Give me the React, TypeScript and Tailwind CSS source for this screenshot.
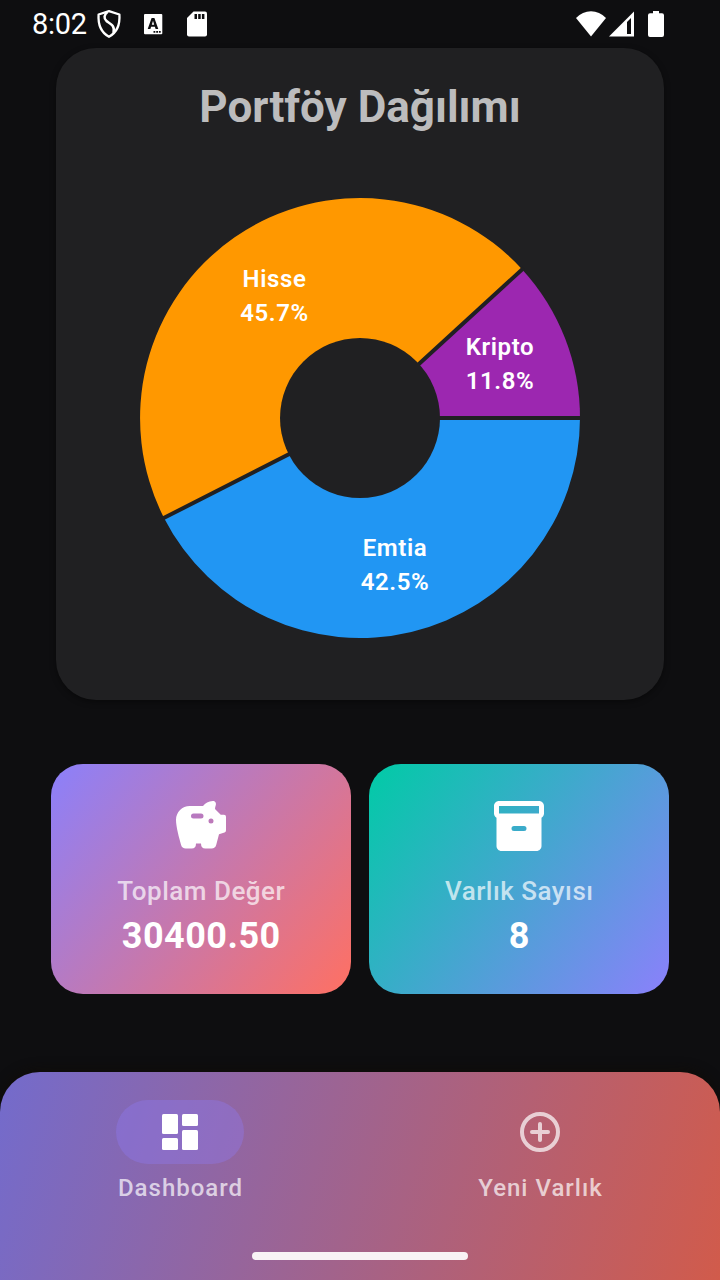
import type { ReactNode } from "react";

function StatusBar() {
  return (
    <header className="flex h-12 shrink-0 items-center justify-between pl-8 pr-14 text-white">
      <div className="flex h-full items-center">
        <span className="w-[64px] text-[29px] leading-[48px] tracking-[-0.3px]">8:02</span>
        <svg className="h-12 w-[26px]" viewBox="96 0 26 48" fill="none" stroke="#fff">
          <path d="M109 11.2L98.6 14.5C98 23 99.500 31.500 109 36.800C118.500 31.500 120 23 119.400 14.500Z" strokeWidth="2.300" strokeLinejoin="round" />
          <path d="M107.500 12C104 14.500 103.500 18.500 106.500 21C109.500 23.500 115.500 25 113.500 33" strokeWidth="2.500" />
        </svg>
        <svg className="ml-[22px] h-12 w-[19px]" viewBox="144 0 19 48">
          <rect x="144" y="14" width="18.300" height="20.300" rx="1" fill="#fff" />
          <path fillRule="evenodd" d="M151.600 18H154.400L158.300 29H155.600L154.900 26.800H151.100L150.400 29H147.700ZM153 20.800L151.800 24.700H154.200Z" fill="#0e0e10" />
          <path d="M153.500 31h1.800v1.700h-1.800zm2.700 0h1.800v1.700h-1.800zm2.700 0h1.800v1.700h-1.800z" fill="#0e0e10" />
        </svg>
        <svg className="ml-6 h-12 w-5" viewBox="187 0 20 48">
          <path d="M193.500 11.500H205Q207 11.500 207 13.500V34.500Q207 36.500 205 36.500H189Q187 36.500 187 34.500V18Z" fill="#fff" />
          <path d="M194.500 14h2.500v5h-2.500zm3.700 0h2.500v5h-2.500zm3.700 0h2.500v5h-2.500z" fill="#0e0e10" />
        </svg>
      </div>
      <svg className="h-12 w-[88px]" viewBox="576 0 88 48" fill="#fff">
        <path d="M576 18Q582.500 11.200 591 11.200T606 18L591 36.500Z" />
        <path d="M609 36.500L634 11.500V36.500Z" />
        <path d="M627 22L631 18V34H627Z" fill="#0e0e10" />
        <path d="M653 11h6v2.300h3q2 0 2 2V35q0 2-2 2h-12q-2 0-2-2V15.300q0-2 2-2h3z" />
      </svg>
    </header>
  );
}

function SliceLabel({ name, share, place }: { name: string; share: string; place: string }) {
  return (
    <div className={`absolute w-24 text-center text-[24px] leading-[34px] font-semibold tracking-[0.6px] text-white ${place}`}>
      <div>{name}</div>
      <div>{share}</div>
    </div>
  );
}

function Donut() {
  return (
    <div className="relative mx-auto mt-[65px] h-[440px] w-[440px]">
      <svg viewBox="-220 -220 440 440" className="h-full w-full">
        <path d="M0 0H220A220 220 0 0 1 -196 99.900Z" fill="#2196f3" />
        <path d="M0 0L-196 99.900A220 220 0 0 1 162.200 -148.600Z" fill="#ff9800" />
        <path d="M0 0L162.200 -148.600A220 220 0 0 1 220 0Z" fill="#9c27b0" />
        <path d="M0 0H222M0 0L-197.800 100.800M0 0L163.700 -150" stroke="#202022" strokeWidth="4" />
        <circle r="80" fill="#202022" />
      </svg>
      <SliceLabel name="Hisse" share="45.7%" place="left-[86.5px] top-[64px]" />
      <SliceLabel name="Kripto" share="11.8%" place="left-[312px] top-[132px]" />
      <SliceLabel name="Emtia" share="42.5%" place="left-[207px] top-[333px]" />
    </div>
  );
}

function StatCard({ icon, label, value, tone }: { icon: ReactNode; label: string; value: string; tone: string }) {
  return (
    <section className={`flex h-[230px] flex-1 flex-col items-center rounded-[32px] pt-8 ${tone}`}>
      {icon}
      <div className="mt-[17px] pl-[0.5px] text-[26px] leading-9 font-medium tracking-[0.5px] text-white/70">{label}</div>
      <div className="mt-[3px] pl-[0.5px] text-[36px] leading-[48px] font-bold tracking-[0.5px] text-white">{value}</div>
    </section>
  );
}

function PiggyIcon() {
  return (
    <svg viewBox="0 0 24 24" className="h-[60px] w-[60px]" fill="#fff">
      <path fillRule="evenodd" d="M7.5 4H12.800C13.700 2.900 15 2 16.700 2C17.700 2 18.200 2.800 17.900 3.700C17.700 4.300 17.600 4.800 17.600 5.200L19.900 7.500H21.200Q22 7.500 22 8.300V13.700Q22 14.400 21.400 14.600L19.200 15.300L18.100 19.500Q17.700 21 16.200 21H13.700Q12 21 12 19H10Q10 21 8.300 21H5.900Q4.400 21 4 19.500C3.300 16.900 2 12.400 2 9.500C2 6.500 4.500 4 7.500 4ZM9 7A1 1 0 0 0 9 9H12A1 1 0 0 0 12 7ZM16 9A1 1 0 1 0 16 11A1 1 0 1 0 16 9Z" />
    </svg>
  );
}

function BoxIcon() {
  return (
    <svg viewBox="0 0 24 24" className="h-[60px] w-[60px]" fill="#fff">
      <path fillRule="evenodd" d="M20 2H4C2.900 2 2 2.900 2 4V7.010C2 7.730 2.430 8.350 3 8.700V20C3 21.100 3.900 22 5 22H19C20.100 22 21 21.100 21 20V8.700C21.570 8.350 22 7.730 22 7.010V4C22 2.900 21.100 2 20 2ZM10 12H14A1 1 0 0 1 14 14H10A1 1 0 0 1 10 12ZM4 4H20V7H4Z" />
    </svg>
  );
}

function NavItem({ icon, label, active = false }: { icon: ReactNode; label: string; active?: boolean }) {
  return (
    <div className="flex flex-1 flex-col items-center">
      <div className={`flex h-16 w-32 items-center justify-center rounded-full ${active ? "bg-[#907cf5]/35" : ""}`}>{icon}</div>
      <span className="mt-2 pl-px text-[24px] leading-8 font-medium tracking-[1px] text-white/70">{label}</span>
    </div>
  );
}

export default function App() {
  return (
    <div className="flex h-[1280px] w-[720px] flex-col overflow-hidden bg-[#0e0e10] font-['Roboto',sans-serif]">
      <StatusBar />
      <section className="mx-14 h-[652px] shrink-0 rounded-[40px] bg-[#202022] pt-[33px] shadow-[0_2px_6px_rgba(0,0,0,0.4)]">
        <h1 className="text-center text-[44px] leading-[52px] font-bold text-[#bcbcbd]">Portföy Dağılımı</h1>
        <Donut />
      </section>
      <div className="mt-16 flex gap-[18px] px-[51px]">
        <StatCard icon={<PiggyIcon />} label="Toplam Değer" value="30400.50" tone="bg-[linear-gradient(127.5deg,#8b80fb,#ff7062)]" />
        <StatCard icon={<BoxIcon />} label="Varlık Sayısı" value="8" tone="bg-[linear-gradient(127.5deg,#00cba6,#8b80fb)]" />
      </div>
      <nav className="mt-[78px] flex h-[208px] shrink-0 flex-col items-center rounded-t-[40px] bg-[linear-gradient(106.1deg,#736bcc,#d15b4b)] pt-7 shadow-[0_-2px_12px_rgba(15,12,8,0.9)]">
        <div className="flex w-full">
          <NavItem
            active
            label="Dashboard"
            icon={
              <svg viewBox="0 0 48 48" className="h-12 w-12" fill="#fff">
                <rect x="6" y="6" width="16" height="20" rx="1.500" />
                <rect x="26" y="6" width="16" height="12" rx="1.500" />
                <rect x="6" y="30" width="16" height="12" rx="1.500" />
                <rect x="26" y="22" width="16" height="20" rx="1.500" />
              </svg>
            }
          />
          <NavItem
            label="Yeni Varlık"
            icon={
              <svg viewBox="0 0 48 48" className="h-12 w-12 opacity-70" fill="none" stroke="#fff" strokeWidth="4" strokeLinecap="round">
                <circle cx="24" cy="24" r="18" />
                <path d="M24 16V32M16 24H32" />
              </svg>
            }
          />
        </div>
        <div className="mt-12 h-2 w-[216px] rounded-full bg-[#f8f3f5]" />
      </nav>
    </div>
  );
}
